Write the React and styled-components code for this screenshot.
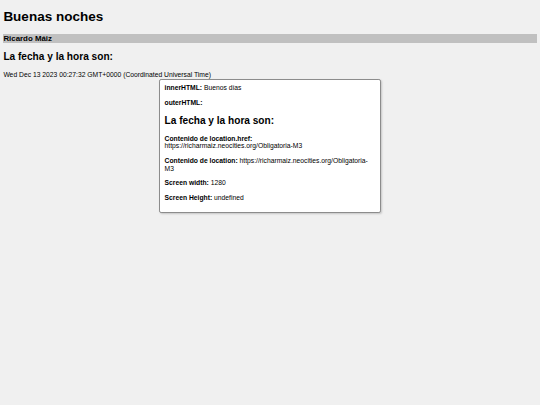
import React from "react";
import styled, { createGlobalStyle } from "styled-components";

const S = 0.421875;
const px = (v) => `${(v * S).toFixed(3)}px`;

const GlobalStyle = createGlobalStyle`
  html, body {
    margin: 0;
    padding: 0;
    background: #f0f0f0;
  }
  body {
    font-family: "Liberation Sans", Arial, Helvetica, sans-serif;
    font-size: ${px(16)};
    line-height: 1.149;
    color: #000;
  }
`;

const Page = styled.div`
  padding: 0 ${px(8)};
  min-height: 100vh;
  overflow: hidden;
`;

const Title = styled.h1`
  font-size: ${px(32)};
  line-height: 1.149;
  font-weight: bold;
  margin: ${px(21.44)} 0;
`;

const NameBar = styled.h3`
  background: #c0c0c0;
  font-size: ${px(18.72)};
  line-height: 1.149;
  font-weight: bold;
  margin: 0;
`;

const Subtitle = styled.h2`
  font-size: ${px(24)};
  line-height: 1.149;
  font-weight: bold;
  margin: ${px(19.92)} 0;
`;

const DateLine = styled.div`
  font-size: ${px(16)};
  line-height: 1.149;
`;

const Panel = styled.div`
  width: ${px(500)};
  margin: 0 auto;
  padding: ${px(10)};
  background: #fff;
  border: 1px solid #8c8c8c;
  border-radius: ${px(5)};
  box-shadow: 1px 1px 2px rgba(0, 0, 0, 0.18);
`;

const Field = styled.p`
  margin: ${px(16)} 0;
  line-height: 1.149;
  &:first-child {
    margin-top: 0;
  }
`;

const Label = styled.strong`
  font-weight: bold;
`;

const fields = [
  { label: "innerHTML:", value: "Buenos días" },
  { label: "outerHTML:", value: "" },
];

const fields2 = [
  { label: "Contenido de location.href:", value: "https://richarmaiz.neocities.org/Obligatoria-M3", br: true },
  { label: "Contenido de location:", value: "https://richarmaiz.neocities.org/Obligatoria-M3" },
  { label: "Screen width:", value: "1280" },
  { label: "Screen Height:", value: "undefined" },
];

function Row({ label, value, br }) {
  return (
    <Field>
      <Label>{label}</Label>
      {br ? <br /> : " "}
      {value}
    </Field>
  );
}

export default function App() {
  return (
    <>
      <GlobalStyle />
      <Page>
        <Title>Buenas noches</Title>
        <NameBar>Ricardo Máiz</NameBar>
        <Subtitle>La fecha y la hora son:</Subtitle>
        <DateLine>Wed Dec 13 2023 00:27:32 GMT+0000 (Coordinated Universal Time)</DateLine>
        <Panel>
          {fields.map((f) => (
            <Row key={f.label} {...f} />
          ))}
          <Subtitle>La fecha y la hora son:</Subtitle>
          {fields2.map((f) => (
            <Row key={f.label} {...f} />
          ))}
        </Panel>
      </Page>
    </>
  );
}
